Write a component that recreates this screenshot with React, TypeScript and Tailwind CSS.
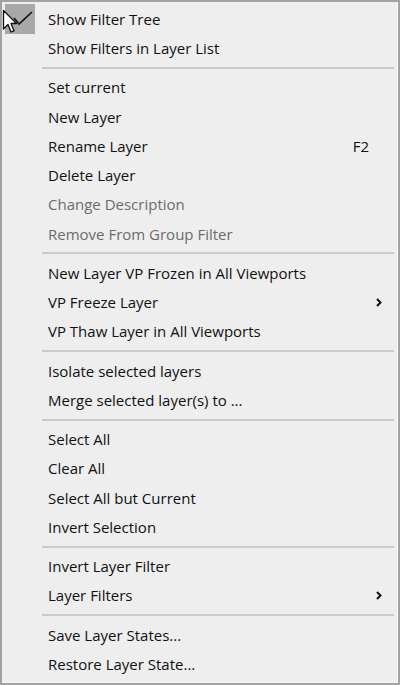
import React from "react";

type Item = { label: string; disabled?: boolean; shortcut?: string; sub?: boolean; checked?: boolean };

const groups: Item[][] = [
  [{ label: "Show Filter Tree", checked: true }, { label: "Show Filters in Layer List" }],
  [
    { label: "Set current" },
    { label: "New Layer" },
    { label: "Rename Layer", shortcut: "F2" },
    { label: "Delete Layer" },
    { label: "Change Description", disabled: true },
    { label: "Remove From Group Filter", disabled: true },
  ],
  [
    { label: "New Layer VP Frozen in All Viewports" },
    { label: "VP Freeze Layer", sub: true },
    { label: "VP Thaw Layer in All Viewports" },
  ],
  [{ label: "Isolate selected layers" }, { label: "Merge selected layer(s) to ..." }],
  [
    { label: "Select All" },
    { label: "Clear All" },
    { label: "Select All but Current" },
    { label: "Invert Selection" },
  ],
  [{ label: "Invert Layer Filter" }, { label: "Layer Filters", sub: true }],
  [{ label: "Save Layer States..." }, { label: "Restore Layer State..." }],
];

function Chevron() {
  return (
    <svg width="6" height="9" viewBox="0 0 6 9">
      <path d="M1 1 L4.5 4.5 L1 8" fill="none" stroke="#111111" strokeWidth="2" />
    </svg>
  );
}

function Row({ item }: { item: Item }) {
  return (
    <div className="flex h-[29.25px] items-center">
      <div className="flex w-[46px] shrink-0 items-center">
        {item.checked && (
          <div className="ml-[3px] h-[30px] w-[30px] bg-[#a8a8a8]">
            <svg width="30" height="30" viewBox="0 0 30 30">
              <polyline points="9,14 14,20 27,8" fill="none" stroke="#111111" strokeWidth="1.7" />
            </svg>
          </div>
        )}
      </div>
      <span className={"flex-1 whitespace-nowrap " + (item.disabled ? "text-[#6b6b6b]" : "text-[#111111]")}>
        {item.label}
      </span>
      {item.shortcut && <span className="text-[#111111]">{item.shortcut}</span>}
      <div className="flex w-[28px] shrink-0 items-center pl-[7px]">{item.sub && <Chevron />}</div>
    </div>
  );
}

export default function App() {
  return (
    <div
      className="relative h-[685px] w-[400px] overflow-hidden border-2 border-[#a2a2a2] bg-[#eeeeee] text-[15px] font-medium"
      style={{ fontFamily: '"Open Sans", "Noto Sans", sans-serif' }}
    >
      <div className="h-full border-r border-b border-[#fafafa] pt-[2.4px]">
        {groups.map((g, gi) => (
          <div key={gi}>
            {gi > 0 && (
              <div className="flex h-[10px] items-center pl-[40px] pr-[3px]">
                <div className="h-[2px] w-full bg-[#cbcbcb]" />
              </div>
            )}
            {g.map((it) => (
              <Row key={it.label} item={it} />
            ))}
          </div>
        ))}
      </div>
      {/* mouse pointer over the checked box */}
      <svg className="absolute left-0 top-[7px]" width="16" height="26" viewBox="0 0 16 26">
        <path
          d="M1.5 1.5 L1.5 20 L6 15.5 L9 23 L12 21.8 L9 14.5 L14.5 14.5 Z"
          fill="#ffffff"
          stroke="#111111"
          strokeWidth="1.3"
          strokeLinejoin="round"
        />
      </svg>
    </div>
  );
}
